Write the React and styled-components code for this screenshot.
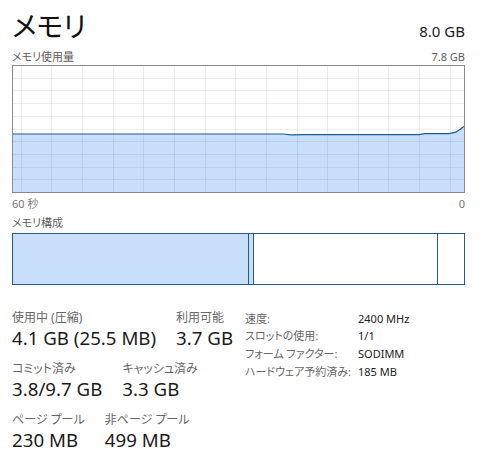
import React from 'react';
import styled, { createGlobalStyle } from 'styled-components';

const GlobalStyle = createGlobalStyle`
  body {
    margin: 0;
    background: #ffffff;
    font-family: "Noto Sans", "Noto Sans CJK JP", sans-serif;
    font-feature-settings: "palt";
    color: #1a1a1a;
  }
`;

const Page = styled.div`
  width: 486px;
  box-sizing: border-box;
  padding: 8px 21px 0 12px;
`;

const Header = styled.div`
  display: flex;
  justify-content: space-between;
  align-items: baseline;
  height: 36px;
`;

const Title = styled.h1`
  margin: 0;
  font-size: 28px;
  line-height: 36px;
  font-weight: 400;
  color: #111111;
`;

const Capacity = styled.span`
  font-size: 15px;
  color: #1a1a1a;
`;

const AxisRow = styled.div`
  display: flex;
  justify-content: space-between;
  font-size: 11px;
  line-height: 14px;
  color: ${(p) => (p.$muted ? '#777777' : '#5c5c5c')};
  margin-top: ${(p) => p.$top || 0}px;
`;

const SectionLabel = styled.div`
  font-size: 11px;
  line-height: 14px;
  color: #5c5c5c;
  margin-top: ${(p) => p.$top || 0}px;
`;

const GraphBox = styled.div`
  box-sizing: border-box;
  height: 128px;
  border: 1px solid #8a8a8a;
  margin-top: 1px;
  svg {
    display: block;
  }
`;

const CompBar = styled.div`
  box-sizing: border-box;
  display: flex;
  height: 52px;
  margin-top: 3px;
  border: 1px solid #24598f;
`;

const Segment = styled.div`
  flex: ${(p) => (p.$w ? `0 0 ${p.$w}px` : '1 1 auto')};
  box-sizing: border-box;
  background: ${(p) => (p.$filled ? '#c9defa' : '#ffffff')};
  border-right: ${(p) => (p.$last ? 'none' : '1px solid #24598f')};
`;

const Stats = styled.div`
  display: grid;
  grid-template-columns: 233px 1fr;
  margin-top: 25px;
`;

const StatRows = styled.div`
  display: flex;
  flex-direction: column;
  gap: 11px;
`;

const StatRow = styled.div`
  display: flex;
  gap: 20px;
`;

const Stat = styled.div`
  display: flex;
  flex-direction: column;
`;

const StatLabel = styled.span`
  font-size: 12px;
  line-height: 16px;
  height: 16px;
  color: #666666;
  white-space: nowrap;
`;

const StatValue = styled.span`
  font-size: 18.7px;
  line-height: 24px;
  height: 24px;
  color: #1a1a1a;
  white-space: nowrap;
`;

const Details = styled.dl`
  display: grid;
  grid-template-columns: 113px auto;
  grid-auto-rows: 17.6px;
  align-items: center;
  margin: 0;
  font-size: 11px;
  line-height: 14px;
`;

const DetailLabel = styled.dt`
  color: #666666;
  white-space: nowrap;
`;

const DetailValue = styled.dd`
  margin: 0;
  color: #222222;
  white-space: nowrap;
`;

const GW = 451;
const GH = 126;

const usage = [
  [0, 68],
  [270, 68],
  [278, 68.8],
  [290, 68.6],
  [406, 68.6],
  [412, 67.6],
  [436, 67.6],
  [443, 66.2],
  [451, 60.5],
];

function MemoryGraph() {
  const vLines = [];
  for (let x = 7.7; x < GW; x += 30.65) vLines.push(Math.round(x) + 0.5);
  const hLines = [];
  for (let k = 1; k < 10; k += 1) hLines.push(Math.round(k * 12.7) - 0.5);

  const line = usage.map(([x, y], i) => `${i ? 'L' : 'M'}${x} ${y}`).join(' ');
  const area = `${line} L${GW} ${GH} L0 ${GH} Z`;

  return (
    <GraphBox>
      <svg width={GW} height={GH} viewBox={`0 0 ${GW} ${GH}`}>
        <path d={area} fill="#c9defa" />
        <g stroke="rgba(0,0,0,0.07)" strokeWidth="1" shapeRendering="crispEdges">
          {vLines.map((x) => (
            <line key={`v${x}`} x1={x} y1="0" x2={x} y2={GH} />
          ))}
          {hLines.map((y) => (
            <line key={`h${y}`} x1="0" y1={y} x2={GW} y2={y} />
          ))}
        </g>
        <path d={line} fill="none" stroke="#1f5a96" strokeWidth="1.2" />
      </svg>
    </GraphBox>
  );
}

const segments = [
  { w: 236, filled: true },
  { w: 5, filled: true },
  { w: 184, filled: false },
  { w: 0, filled: false, last: true },
];

const statRows = [
  [
    { label: '使用中 (圧縮)', value: '4.1 GB (25.5 MB)' },
    { label: '利用可能', value: '3.7 GB' },
  ],
  [
    { label: 'コミット済み', value: '3.8/9.7 GB' },
    { label: 'キャッシュ済み', value: '3.3 GB' },
  ],
  [
    { label: 'ページ プール', value: '230 MB' },
    { label: '非ページ プール', value: '499 MB' },
  ],
];

const details = [
  ['速度:', '2400 MHz'],
  ['スロットの使用:', '1/1'],
  ['フォーム ファクター:', 'SODIMM'],
  ['ハードウェア予約済み:', '185 MB'],
];

export default function App() {
  return (
    <Page>
      <GlobalStyle />
      <Header>
        <Title>メモリ</Title>
        <Capacity>8.0 GB</Capacity>
      </Header>

      <AxisRow $top={6}>
        <span>メモリ使用量</span>
        <span>7.8 GB</span>
      </AxisRow>
      <MemoryGraph />
      <AxisRow $top={4} $muted>
        <span>60 秒</span>
        <span>0</span>
      </AxisRow>

      <SectionLabel $top={5}>メモリ構成</SectionLabel>
      <CompBar>
        {segments.map((s, i) => (
          <Segment key={i} $w={s.w} $filled={s.filled} $last={s.last} />
        ))}
      </CompBar>

      <Stats>
        <StatRows>
          {statRows.map((row, i) => (
            <StatRow key={i}>
              {row.map((s) => (
                <Stat key={s.label}>
                  <StatLabel>{s.label}</StatLabel>
                  <StatValue>{s.value}</StatValue>
                </Stat>
              ))}
            </StatRow>
          ))}
        </StatRows>
        <Details>
          {details.map(([k, v]) => (
            <React.Fragment key={k}>
              <DetailLabel>{k}</DetailLabel>
              <DetailValue>{v}</DetailValue>
            </React.Fragment>
          ))}
        </Details>
      </Stats>
    </Page>
  );
}
